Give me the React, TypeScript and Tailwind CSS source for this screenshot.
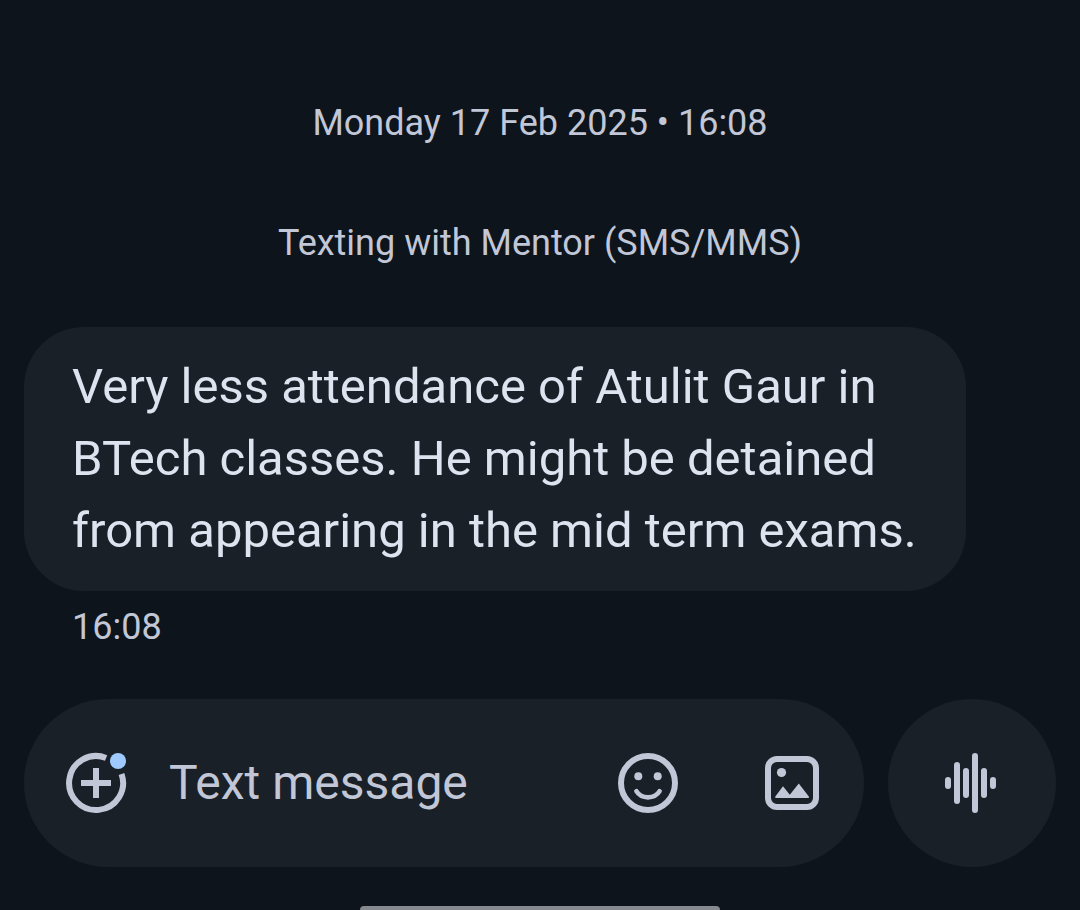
import { useState } from "react";

function AddIcon() {
  return (
    <svg viewBox="0 0 66 66" className="h-[66px] w-[66px]" fill="none" aria-hidden="true">
      <path d="M43.1 7.95A27 27 0 1 0 58.5 23.9" stroke="currentColor" strokeWidth="6" />
      <path d="M33 18v30M18 33h30" stroke="currentColor" strokeWidth="6" />
      <circle cx="55" cy="11" r="8" fill="#9fcaff" />
    </svg>
  );
}

function SmileIcon() {
  return (
    <svg viewBox="0 0 60 60" className="h-[60px] w-[60px]" fill="none" aria-hidden="true">
      <circle cx="30" cy="30" r="27" stroke="currentColor" strokeWidth="6" />
      <circle cx="20.3" cy="23.2" r="4" fill="currentColor" />
      <circle cx="39.7" cy="23.2" r="4" fill="currentColor" />
      <path d="M18.4 38.2C23.2 46.4 36.8 46.4 41.6 38.2" stroke="currentColor" strokeWidth="4.6" strokeLinecap="round" />
    </svg>
  );
}

function ImageIcon() {
  return (
    <svg viewBox="0 0 54 54" className="h-[54px] w-[54px]" fill="none" aria-hidden="true">
      <rect x="3" y="3" width="48" height="48" rx="9" stroke="currentColor" strokeWidth="6" />
      <circle cx="16.5" cy="16.5" r="4.6" fill="currentColor" />
      <path d="M11 42a1 1 0 0 1-.7-1.5L18 30.2l6.8 8.6 9-11.4 10 13a1 1 0 0 1-.8 1.6Z" fill="currentColor" />
    </svg>
  );
}

function WaveIcon() {
  return (
    <svg viewBox="0 0 54 60" className="h-[60px] w-[54px]" fill="none" aria-hidden="true">
      <path
        d="M3 27v6M12 12v36M21 18v24M30 3v54M39 18v24M48 27v6"
        stroke="currentColor"
        strokeWidth="6"
        strokeLinecap="round"
      />
    </svg>
  );
}

export default function App() {
  const [draft, setDraft] = useState("");

  return (
    <main className="flex min-h-screen flex-col bg-[#0d141b] px-6 font-['Roboto','Noto_Sans',sans-serif] text-[#c1c7d6]">
      <header className="flex flex-col gap-[72px] pt-[99px] text-center text-[36px] leading-[48px]">
        <time dateTime="2025-02-17T16:08">Monday 17 Feb 2025 • 16:08</time>
        <p>Texting with Mentor (SMS/MMS)</p>
      </header>

      <section aria-label="Conversation" className="pt-[60px] pr-[90px]">
        <p className="rounded-[60px] bg-[#1a2027] py-6 pr-10 pl-12 text-[49px] leading-[72px] text-[#dde3ef]">
          Very less attendance of Atulit Gaur in BTech classes. He might be detained from appearing in the mid term exams.
        </p>
        <time dateTime="16:08" className="block px-12 pt-3 text-[36px] leading-[48px]">
          16:08
        </time>
      </section>

      <form className="mt-12 flex gap-6" onSubmit={(event) => event.preventDefault()}>
        <div className="flex h-[168px] min-w-0 flex-1 items-center rounded-full bg-[#1a2027] pr-[45px] pl-[39px]">
          <button type="button" aria-label="Add attachment" className="shrink-0">
            <AddIcon />
          </button>
          <input
            type="text"
            aria-label="Text message"
            placeholder="Text message"
            value={draft}
            onChange={(event) => setDraft(event.target.value)}
            className="ml-10 min-w-0 flex-1 bg-transparent text-[48px] leading-[72px] outline-none placeholder:text-[#c1c7d6]"
          />
          <button type="button" aria-label="Insert emoji" className="shrink-0">
            <SmileIcon />
          </button>
          <button type="button" aria-label="Insert image" className="ml-[87px] shrink-0">
            <ImageIcon />
          </button>
        </div>
        <button
          type="button"
          aria-label="Record voice message"
          className="flex h-[168px] w-[168px] shrink-0 items-center justify-center rounded-full bg-[#1a2027]"
        >
          <WaveIcon />
        </button>
      </form>

      <div className="mx-auto mt-auto h-1 w-[360px] rounded-t-md bg-[#86898d]" />
    </main>
  );
}
